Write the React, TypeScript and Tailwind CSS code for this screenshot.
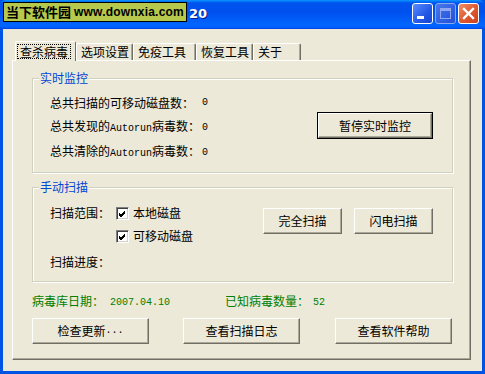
import React from "react";

const cjk = "font-['Noto_Sans_CJK_SC','Noto_Sans_CJK_JP',sans-serif]";

function Btn({ children, className }: { children: React.ReactNode; className: string }) {
  return (
    <div
      className={`flex items-center justify-center bg-[#ece9d8] border border-t-white border-l-white border-r-[#716f64] border-b-[#716f64] shadow-[inset_-1px_-1px_0_#aca899] text-[12px] leading-[12px] text-black ${className}`}
    >
      {children}
    </div>
  );
}

function DefBtn({ children, className }: { children: React.ReactNode; className: string }) {
  return (
    <div className={`border border-black flex ${className}`}>
      <div className="flex-1 flex items-center justify-center bg-[#ece9d8] border border-t-white border-l-white border-r-[#716f64] border-b-[#716f64] shadow-[inset_-1px_-1px_0_#aca899] text-[12px] leading-[12px] text-black">
        {children}
      </div>
    </div>
  );
}

function Check() {
  return (
    <div className="w-[13px] h-[13px] bg-white border border-t-[#808080] border-l-[#808080] border-r-white border-b-white shadow-[inset_1px_1px_0_#404040,inset_-1px_-1px_0_#d4d0c8] flex items-center justify-center">
      <svg width="9" height="9" viewBox="0 0 9 9">
        <path d="M1 4 L3 6 L7 2 M1 5 L3 7 L7 3 M1 6 L3 8 L7 4" stroke="#000" strokeWidth="1" fill="none" shapeRendering="crispEdges" />
      </svg>
    </div>
  );
}

function Mono({ children }: { children: React.ReactNode }) {
  return <span className="font-['Liberation_Mono',monospace] text-[10px]">{children}</span>;
}

function Group({ title, children, className }: { title: string; children: React.ReactNode; className: string }) {
  return (
    <div className={`relative border border-[#d0d0bf] shadow-[inset_1px_1px_0_#fff,1px_1px_0_#fff] ${className}`}>
      <span className="absolute left-[6px] top-[-8px] px-[1px] bg-[#ece9d8] text-[#0046d5] text-[12px] leading-[14px]">
        {title}
      </span>
      {children}
    </div>
  );
}

export default function App() {
  const tabs = [
    { t: "选项设置", w: "w-[57px]" },
    { t: "免疫工具", w: "w-[63px]" },
    { t: "恢复工具", w: "w-[57px]" },
    { t: "关于", w: "w-[48px]" },
  ];
  return (
    <div className={`w-[485px] h-[374px] flex flex-col bg-[#0054e3] ${cjk}`}>
      {/* Title bar */}
      <div className="h-[29px] flex items-center bg-[linear-gradient(180deg,#0997ff_0%,#0053ee_10%,#0050ee_40%,#0066ff_88%,#005bff_95%,#003dd7_100%)] rounded-t-[6px] pl-[3px] pr-[6px]">
        <div className="h-[20px] mt-[-5px] bg-[#b6c94c] border border-black flex items-center px-[2px] whitespace-nowrap">
          <span className="font-bold text-[13px] leading-[16px] text-black">当下软件园</span>
          <span className="ml-[3px] font-['Liberation_Sans',Arial,sans-serif] font-bold text-[12px] tracking-[0.2px] leading-[16px] text-black">
            www.downxia.com
          </span>
        </div>
        <span className="ml-[2px] mt-[-2px] font-['DejaVu_Sans',sans-serif] font-bold text-[13px] text-white [text-shadow:1px_1px_0_#0a1e8c]">
          20
        </span>
        <div className="ml-auto flex gap-[2px] mt-[-3px]">
          <div className="w-[21px] h-[21px] rounded-[3px] border border-white bg-[linear-gradient(135deg,#5a8cff,#2358e6_60%,#1941d0)] relative">
            <div className="absolute left-[4px] bottom-[4px] w-[7px] h-[3px] bg-white" />
          </div>
          <div className="w-[21px] h-[21px] rounded-[3px] border border-[#8aaaf0] bg-[linear-gradient(135deg,#4a78ee,#2e5fe0_60%,#2750d4)] relative">
            <div className="absolute left-[4px] top-[4px] w-[11px] h-[11px] border border-[#8fa8ee] border-t-[3px]" />
          </div>
          <div className="w-[21px] h-[21px] rounded-[3px] border border-white bg-[linear-gradient(135deg,#f0906a,#e05a30_50%,#c8401e)] flex items-center justify-center">
            <svg width="13" height="13" viewBox="0 0 13 13">
              <path d="M2 2 L11 11 M11 2 L2 11" stroke="#fff" strokeWidth="2.4" strokeLinecap="square" />
            </svg>
          </div>
        </div>
      </div>

      {/* Body */}
      <div className="flex-1 mx-[3px] mb-[3px] mr-[3px] bg-[#ece9d8] pl-[9px] pr-[11px] pt-[11px] pb-[11px] flex flex-col">
        {/* Tabs */}
        <div className="flex items-end h-[20px] pl-[3px] relative z-10">
          <div className="w-[61px] h-[20px] mb-[-1px] bg-[#ece9d8] border-t border-l border-white border-r border-r-[#716f64] rounded-t-[2px] flex items-start pt-[2px] pl-[1px]">
            <div className="border border-dotted border-black px-[2px] h-[15px] flex items-center text-[12px] leading-[12px]">
              查杀病毒
            </div>
          </div>
          {tabs.map((tb) => (
            <div
              key={tb.t}
              className={`${tb.w} h-[17px] border-t border-l border-white border-r border-r-[#716f64] shadow-[inset_-1px_0_0_#aca899] rounded-t-[2px] flex items-center pl-[4px] text-[12px] leading-[12px]`}
            >
              {tb.t}
            </div>
          ))}
        </div>

        {/* Panel */}
        <div className="flex-1 border border-t-white border-l-white border-r-[#716f64] border-b-[#716f64] shadow-[inset_-1px_-1px_0_#aca899] pl-[19px] pr-[17px] pt-[17px] flex flex-col text-[12px] leading-[12px] text-black">
          <Group title="实时监控" className="h-[95px] flex">
            <div className="grid grid-cols-[152px_auto] auto-rows-[25px] items-center ml-[17px] mt-[11px]">
              <span>总共扫描的可移动磁盘数：</span>
              <Mono>0</Mono>
              <span>
                总共发现的<Mono>Autorun</Mono>病毒数：
              </span>
              <Mono>0</Mono>
              <span>
                总共清除的<Mono>Autorun</Mono>病毒数：
              </span>
              <Mono>0</Mono>
            </div>
            <DefBtn className="ml-auto mr-[19px] mt-[33px] w-[116px] h-[27px]">暂停实时监控</DefBtn>
          </Group>

          <Group title="手动扫描" className="h-[95px] mt-[14px] flex">
            <div className="flex flex-col ml-[17px] mt-[18px]">
              <div className="flex items-center h-[14px]">
                <span className="w-[66px]">扫描范围：</span>
                <Check />
                <span className="ml-[4px]">本地磁盘</span>
              </div>
              <div className="flex items-center h-[14px] mt-[9px] pl-[66px]">
                <Check />
                <span className="ml-[4px]">可移动磁盘</span>
              </div>
              <div className="mt-[13px]">扫描进度：</div>
            </div>
            <div className="ml-auto mr-[19px] mt-[20px] flex gap-[12px] h-[26px]">
              <Btn className="w-[79px] h-[26px]">完全扫描</Btn>
              <Btn className="w-[79px] h-[26px]">闪电扫描</Btn>
            </div>
          </Group>

          <div className="flex items-center mt-[13px] text-[#008000] h-[12px]">
            <span>病毒库日期：</span>
            <span className="ml-[6px]"><Mono>2007.04.10</Mono></span>
            <span className="ml-[55px]">已知病毒数量：</span>
            <span className="ml-[4px]"><Mono>52</Mono></span>
          </div>

          <div className="flex mt-[11px] pr-[1px]">
            <Btn className="w-[117px] h-[26px]">
              检查更新<Mono>...</Mono>
            </Btn>
            <Btn className="w-[117px] h-[26px] ml-[34px]">查看扫描日志</Btn>
            <Btn className="w-[117px] h-[26px] ml-auto">查看软件帮助</Btn>
          </div>
        </div>
      </div>
    </div>
  );
}
